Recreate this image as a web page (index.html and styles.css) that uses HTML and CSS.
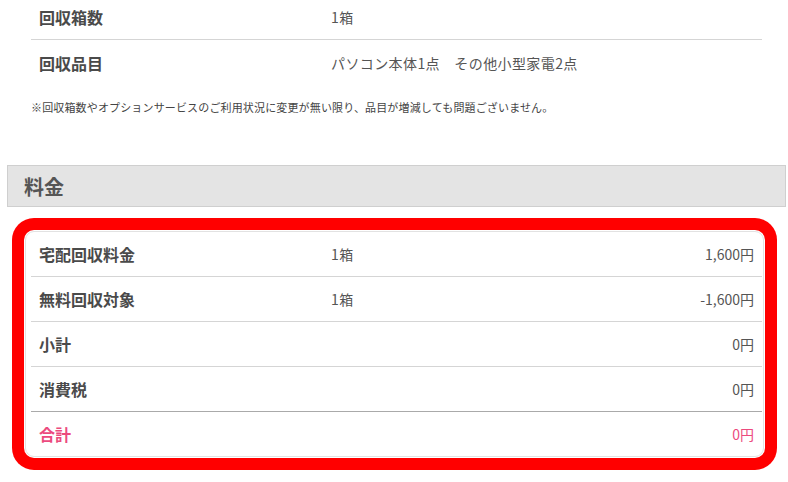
FILE: index.html
```html
<!DOCTYPE html>
<html lang="ja">
<head>
<meta charset="utf-8">
<link rel="stylesheet" href="styles.css">
</head>
<body>
<section class="summary">
  <div class="row">
    <div class="label">回収箱数</div>
    <div class="value">1箱</div>
  </div>
  <div class="row row-last">
    <div class="label">回収品目</div>
    <div class="value">パソコン本体1点　その他小型家電2点</div>
  </div>
</section>
<p class="note">※回収箱数やオプションサービスのご利用状況に変更が無い限り、品目が増減しても問題ございません。</p>

<h2 class="section-head">料金</h2>

<div class="frame">
  <div class="card">
    <div class="card-inner">
      <div class="row">
        <div class="label">宅配回収料金</div>
        <div class="value">1箱</div>
        <div class="amount">1,600円</div>
      </div>
      <div class="row">
        <div class="label">無料回収対象</div>
        <div class="value">1箱</div>
        <div class="amount">-1,600円</div>
      </div>
      <div class="row">
        <div class="label">小計</div>
        <div class="value"></div>
        <div class="amount">0円</div>
      </div>
      <div class="row row-strong">
        <div class="label">消費税</div>
        <div class="value"></div>
        <div class="amount">0円</div>
      </div>
      <div class="row row-total">
        <div class="label">合計</div>
        <div class="value"></div>
        <div class="amount">0円</div>
      </div>
    </div>
  </div>
</div>
</body>
</html>
```

FILE: styles.css
```css
html, body {
  margin: 0;
  padding: 0;
  background: #fff;
}
body {
  font-family: "Noto Sans CJK JP", "Noto Sans", sans-serif;
  color: #555;
}
.summary {
  margin: -5px 26px 0 31px;
}
.row {
  display: grid;
  grid-template-columns: 292px 1fr auto;
  align-items: center;
  height: 44px;
  padding: 0 8px 0 8px;
  border-bottom: 1px solid #d5d5d5;
}
.summary .row-last {
  height: 46px;
  border-bottom: none;
}
.label {
  font-size: 16px;
  font-weight: bold;
  color: #4a4a4a;
  line-height: 20px;
}
.value, .amount {
  font-size: 14px;
  color: #555;
  line-height: 20px;
}
.value {
  letter-spacing: 0.4px;
}
.amount {
  text-align: right;
}
.note {
  margin: 13px 0 0 31px;
  font-size: 11px;
  line-height: 16px;
  letter-spacing: 0.15px;
  color: #444;
}
.section-head {
  margin: 50px 2px 0 7px;
  height: 40px;
  display: flex;
  align-items: center;
  padding-left: 16px;
  background: #e4e4e4;
  border: 1px solid #cfcfcf;
  font-size: 20px;
  font-weight: bold;
  color: #555;
}
.frame {
  margin: 11px 11px 0 12px;
  padding: 12px;
  background: #ff0000;
  border-radius: 22px;
}
.card {
  background: #fff;
  border-radius: 10px;
  padding: 1px;
}
.card-inner {
  border: 1px solid #e2e2e2;
  border-radius: 9px;
  padding: 0 1px 0 5px;
}
.card-inner .row-total {
  border-bottom: none;
}
.card-inner .row-strong {
  border-bottom-color: #aaa;
}
.row-total .label,
.row-total .amount {
  color: #ec4a7e;
}
```
